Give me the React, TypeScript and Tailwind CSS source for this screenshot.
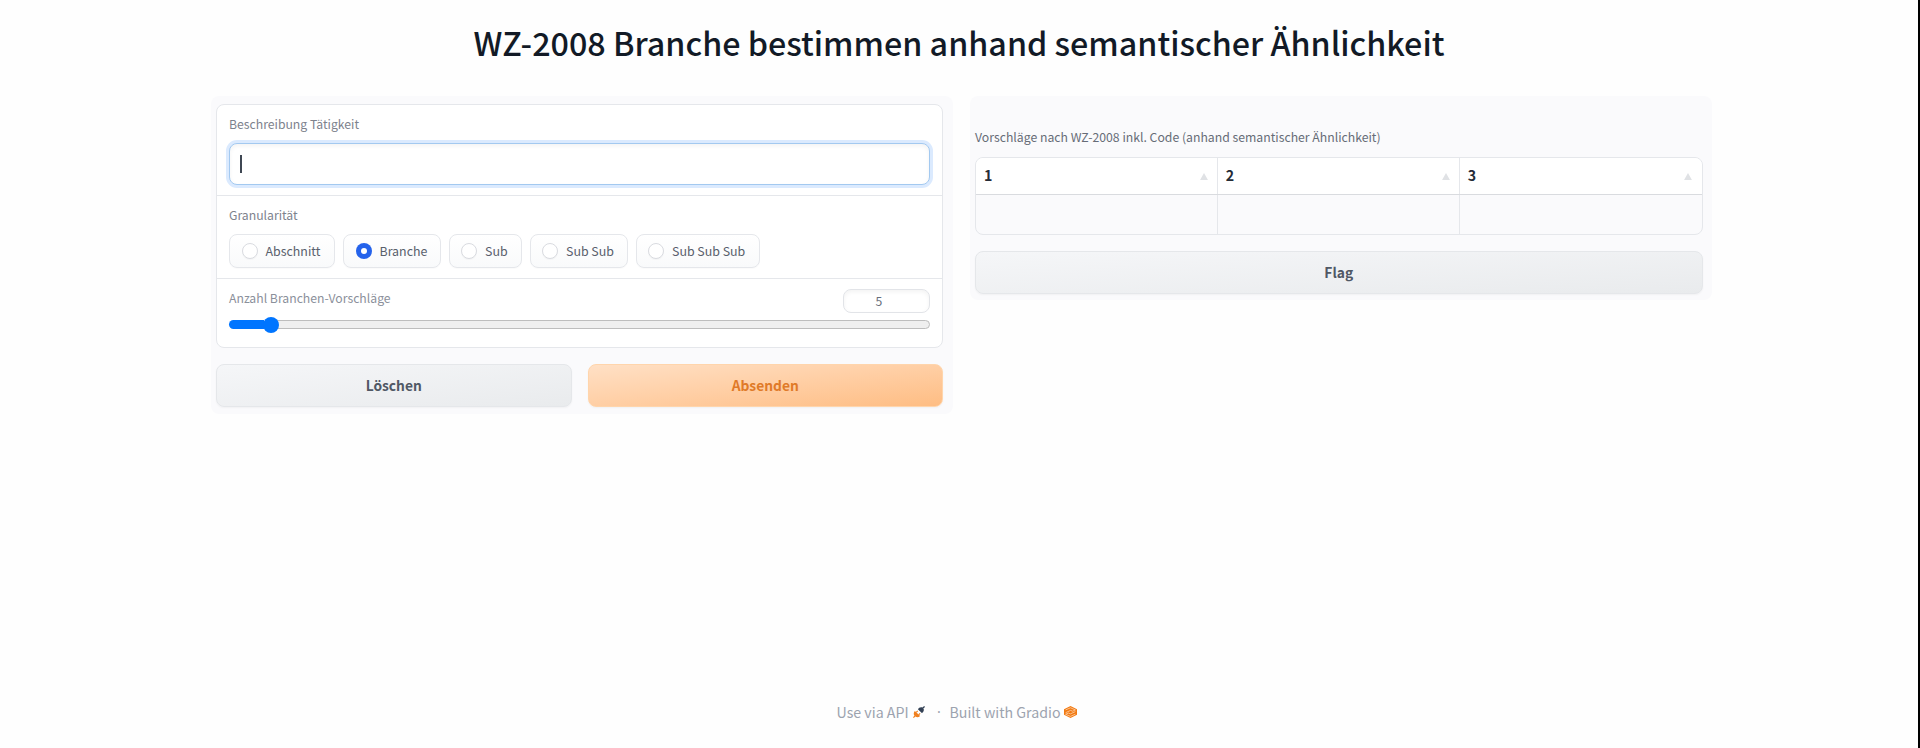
const granularities = ["Abschnitt", "Branche", "Sub", "Sub Sub", "Sub Sub Sub"];
const chipWidths = ["w-[106px]", "w-[97.5px]", "w-[73px]", "w-[98px]", "w-[124px]"];

function Radio({ checked }: { checked: boolean }) {
  return checked ? (
    <span className="flex size-4 shrink-0 items-center justify-center rounded-full bg-[#2563eb]">
      <span className="size-[6px] rounded-full bg-white" />
    </span>
  ) : (
    <span className="size-4 shrink-0 rounded-full border border-[#d9dbe0] bg-white shadow-[0_1px_1px_rgba(0,0,0,0.03)]" />
  );
}

function Textbox() {
  return (
    <section className="flex h-[91px] flex-col border-b border-[#e5e7eb] px-3 pt-[7px]">
      <label className="flex h-6 items-center text-[#7d828d]">Beschreibung Tätigkeit</label>
      <div className="mt-[7px] flex h-[42px] items-center rounded-lg border border-[#a3c9f0] bg-white px-[10px] pb-px shadow-[0_0_0_3px_#dbeafe,inset_0_2px_4px_rgba(0,0,0,0.05)]">
        <span className="h-[18px] w-[2px] bg-[#3f4753]" />
      </div>
    </section>
  );
}

function Granularity() {
  return (
    <section className="flex h-[83px] flex-col border-b border-[#e5e7eb] px-3 pt-[7px]">
      <span className="flex h-6 items-center text-[#7d828d]">Granularität</span>
      <div className="mt-[7px] flex gap-2">
        {granularities.map((name, i) => (
          <div
            key={name}
            className={`flex h-[34px] items-center gap-2 rounded-lg border border-[#e5e7eb] bg-linear-to-b from-white to-[#f9fafb] pl-[11.5px] text-[12.4px] whitespace-nowrap text-[#59606c] shadow-[0_1px_1px_rgba(0,0,0,0.02)] ${chipWidths[i]}`}
          >
            <Radio checked={name === "Branche"} />
            {name}
          </div>
        ))}
      </div>
    </section>
  );
}

function Slider() {
  return (
    <section className="flex h-[68px] flex-col px-3 pt-[10px]">
      <div className="flex h-6 justify-between">
        <span className="flex h-[19px] items-center text-[#8b909b]">Anzahl Branchen-Vorschläge</span>
        <span className="flex h-6 w-[87px] items-center rounded-lg border border-[#e2e4e8] bg-white pl-[31.5px] text-[#686e7a] shadow-[inset_0_2px_4px_rgba(0,0,0,0.05)]">
          5
        </span>
      </div>
      <div className="mt-[3.5px] flex h-[16px] items-center">
        <span className="h-[9px] w-[35px] rounded-l-full bg-[#0075ff]" />
        <span className="z-10 -ml-px size-[16px] shrink-0 rounded-full bg-[#0075ff]" />
        <span className="-ml-1 h-[9px] grow rounded-r-full border border-[#bdbdbd] bg-[#efefef]" />
      </div>
    </section>
  );
}

function Button({ label, primary = false }: { label: string; primary?: boolean }) {
  const tone = primary
    ? "border-[#ffd5ac] from-[#ffe0c5] to-[#febd83] text-[#e07a28]"
    : "border-[#e5e7ea] from-[#f5f6f8] to-[#e9ebed] text-[#505865]";
  return (
    <button
      className={`flex h-[42.5px] flex-1 items-center justify-center rounded-lg border bg-linear-to-br pt-px text-[13.8px] font-bold shadow-[0_1px_2px_rgba(0,0,0,0.04)] ${tone}`}
    >
      {label}
    </button>
  );
}

function ResultTable() {
  return (
    <div className="mt-[8px] h-[78px] overflow-hidden rounded-lg border border-[#e5e7eb]">
      <div className="grid h-[37px] grid-cols-3 divide-x divide-[#e5e7eb] border-b border-[#d9dbdf] bg-white">
        {["1", "2", "3"].map((n) => (
          <div key={n} className="flex items-center justify-between pr-[9px] pb-[1px] pl-2 text-[14.2px] font-bold text-[#252b36]">
            {n}
            <svg className="mt-[2px] h-[7px] w-[8px]" viewBox="0 0 9 8" fill="#e0e2e5">
              <path d="M4.5 0L9 8H0Z" />
            </svg>
          </div>
        ))}
      </div>
      <div className="grid h-[39px] grid-cols-3 divide-x divide-[#e5e7eb]">
        <span />
        <span />
        <span />
      </div>
    </div>
  );
}

function ApiIcon() {
  return (
    <svg className="size-3" viewBox="0 0 12 12">
      <path d="M4.9 3.2L8.8 7.1C10.2 6.2 11 4.8 10.8 3.2L10.3 2.6L12 .9L11.2 .1L9.4 1.6C7.6.8 5.9 1.7 4.9 3.2Z" fill="#334155" />
      <path d="M1.9 4.9L7.1 10.1C5.5 11.5 3.8 11.6 2.4 10.6L.8 12L0 11.2L1.4 9.7C.4 8 .6 6.3 1.9 4.9Z" fill="#f0801f" />
      <path d="M3.2 6.4L4.7 4.9M5.6 8.8L7.1 7.3" stroke="#f0801f" strokeWidth="1.2" />
    </svg>
  );
}

function GradioIcon() {
  return (
    <svg className="h-3 w-[13px]" viewBox="0 0 13 12" fill="none">
      <path d="M6.5 0L13 3.2V8.7L6.5 12L0 8.7V3.2Z" fill="#f27a12" />
      <path
        d="M1.6 3.9L6.5 1.8L11.4 3.9L8.6 5.2L6.6 4.4L1.6 6.7M11.4 5.6L6.4 7.9L4.4 7.1L1.6 8.3L6.5 10.4L11.4 8.2"
        stroke="#ffe6d0"
        strokeWidth=".65"
      />
    </svg>
  );
}

export default function App() {
  return (
    <div className="flex h-[748px] w-full flex-col border-r-2 border-black bg-[#fefefe] font-['Noto_Sans_CJK_SC','Noto_Sans',sans-serif] text-[12.23px] leading-none">
      <h1 className="flex h-[96px] items-center justify-center pb-[11px] text-[32.27px] font-medium text-[#121a26]">
        WZ-2008 Branche bestimmen anhand semantischer Ähnlichkeit
      </h1>
      <main className="flex items-start gap-[17px] pl-[211px]">
        <div className="h-[318px] w-[742px] rounded-lg bg-[#fafafc] pt-2 pl-[5px]">
          <div className="h-[244px] w-[727px] rounded-lg border border-[#e5e7eb] bg-white">
            <Textbox />
            <Granularity />
            <Slider />
          </div>
          <div className="mt-[16px] flex w-[727px] gap-4">
            <Button label="Löschen" />
            <Button label="Absenden" primary />
          </div>
        </div>
        <div className="h-[204px] w-[742px] rounded-lg bg-[#fafafc] pt-[29px] pl-[5px]">
          <div className="w-[727.5px]">
            <p className="flex h-6 items-center text-[12.24px] text-[#666c77]">
              Vorschläge nach WZ-2008 inkl. Code (anhand semantischer Ähnlichkeit)
            </p>
            <ResultTable />
            <div className="mt-4 flex">
              <Button label="Flag" />
            </div>
          </div>
        </div>
      </main>
      <footer className="mt-auto mb-[24px] flex h-6 items-center pl-[836.5px] text-[14.2px] text-[#9ca3af]">
        <span className="w-[73px]">Use via API</span>
        <span className="ml-[3px]">
          <ApiIcon />
        </span>
        <span className="ml-[12.5px] w-[12.5px] font-['Noto_Sans',sans-serif]">·</span>
        <span className="w-[112px] whitespace-nowrap">Built with Gradio</span>
        <span className="ml-[2.5px]">
          <GradioIcon />
        </span>
      </footer>
    </div>
  );
}
